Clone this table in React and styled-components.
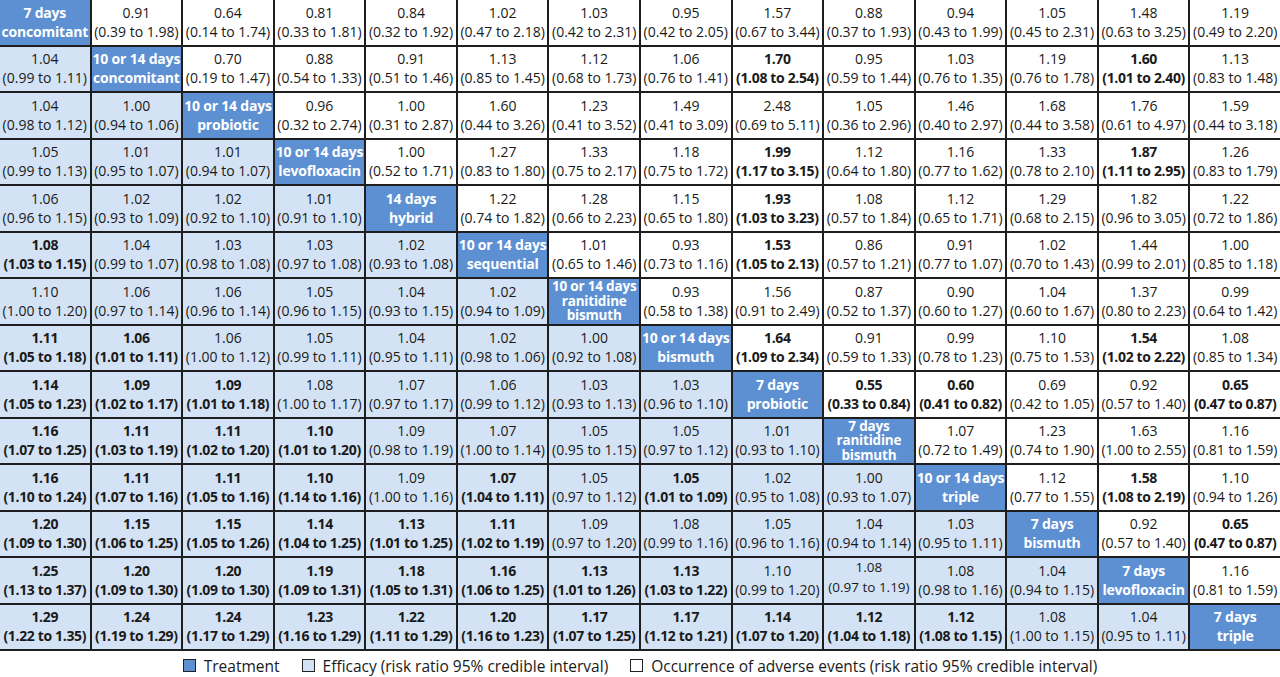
import React from "react";
import styled, { createGlobalStyle } from "styled-components";

const GlobalStyle = createGlobalStyle`
  html, body { margin: 0; padding: 0; background: #ffffff; }
  body { font-family: "Open Sans", "Noto Sans", sans-serif; color: #1a1a1a; }
`;

const TREATMENTS = [
  ["7 days", "concomitant"],
  ["10 or 14 days", "concomitant"],
  ["10 or 14 days", "probiotic"],
  ["10 or 14 days", "levofloxacin"],
  ["14 days", "hybrid"],
  ["10 or 14 days", "sequential"],
  ["10 or 14 days", "ranitidine", "bismuth"],
  ["10 or 14 days", "bismuth"],
  ["7 days", "probiotic"],
  ["7 days", "ranitidine", "bismuth"],
  ["10 or 14 days", "triple"],
  ["7 days", "bismuth"],
  ["7 days", "levofloxacin"],
  ["7 days", "triple"],
];

// "*" prefix marks bold (significant) values
const ROWS = [
  "T|0.91 0.39 1.98|0.64 0.14 1.74|0.81 0.33 1.81|0.84 0.32 1.92|1.02 0.47 2.18|1.03 0.42 2.31|0.95 0.42 2.05|1.57 0.67 3.44|0.88 0.37 1.93|0.94 0.43 1.99|1.05 0.45 2.31|1.48 0.63 3.25|1.19 0.49 2.20",
  "1.04 0.99 1.11|T|0.70 0.19 1.47|0.88 0.54 1.33|0.91 0.51 1.46|1.13 0.85 1.45|1.12 0.68 1.73|1.06 0.76 1.41|*1.70 1.08 2.54|0.95 0.59 1.44|1.03 0.76 1.35|1.19 0.76 1.78|*1.60 1.01 2.40|1.13 0.83 1.48",
  "1.04 0.98 1.12|1.00 0.94 1.06|T|0.96 0.32 2.74|1.00 0.31 2.87|1.60 0.44 3.26|1.23 0.41 3.52|1.49 0.41 3.09|2.48 0.69 5.11|1.05 0.36 2.96|1.46 0.40 2.97|1.68 0.44 3.58|1.76 0.61 4.97|1.59 0.44 3.18",
  "1.05 0.99 1.13|1.01 0.95 1.07|1.01 0.94 1.07|T|1.00 0.52 1.71|1.27 0.83 1.80|1.33 0.75 2.17|1.18 0.75 1.72|*1.99 1.17 3.15|1.12 0.64 1.80|1.16 0.77 1.62|1.33 0.78 2.10|*1.87 1.11 2.95|1.26 0.83 1.79",
  "1.06 0.96 1.15|1.02 0.93 1.09|1.02 0.92 1.10|1.01 0.91 1.10|T|1.22 0.74 1.82|1.28 0.66 2.23|1.15 0.65 1.80|*1.93 1.03 3.23|1.08 0.57 1.84|1.12 0.65 1.71|1.29 0.68 2.15|1.82 0.96 3.05|1.22 0.72 1.86",
  "*1.08 1.03 1.15|1.04 0.99 1.07|1.03 0.98 1.08|1.03 0.97 1.08|1.02 0.93 1.08|T|1.01 0.65 1.46|0.93 0.73 1.16|*1.53 1.05 2.13|0.86 0.57 1.21|0.91 0.77 1.07|1.02 0.70 1.43|1.44 0.99 2.01|1.00 0.85 1.18",
  "1.10 1.00 1.20|1.06 0.97 1.14|1.06 0.96 1.14|1.05 0.96 1.15|1.04 0.93 1.15|1.02 0.94 1.09|T|0.93 0.58 1.38|1.56 0.91 2.49|0.87 0.52 1.37|0.90 0.60 1.27|1.04 0.60 1.67|1.37 0.80 2.23|0.99 0.64 1.42",
  "*1.11 1.05 1.18|*1.06 1.01 1.11|1.06 1.00 1.12|1.05 0.99 1.11|1.04 0.95 1.11|1.02 0.98 1.06|1.00 0.92 1.08|T|*1.64 1.09 2.34|0.91 0.59 1.33|0.99 0.78 1.23|1.10 0.75 1.53|*1.54 1.02 2.22|1.08 0.85 1.34",
  "*1.14 1.05 1.23|*1.09 1.02 1.17|*1.09 1.01 1.18|1.08 1.00 1.17|1.07 0.97 1.17|1.06 0.99 1.12|1.03 0.93 1.13|1.03 0.96 1.10|T|*0.55 0.33 0.84|*0.60 0.41 0.82|0.69 0.42 1.05|0.92 0.57 1.40|*0.65 0.47 0.87",
  "*1.16 1.07 1.25|*1.11 1.03 1.19|*1.11 1.02 1.20|*1.10 1.01 1.20|1.09 0.98 1.19|1.07 1.00 1.14|1.05 0.95 1.15|1.05 0.97 1.12|1.01 0.93 1.10|T|1.07 0.72 1.49|1.23 0.74 1.90|1.63 1.00 2.55|1.16 0.81 1.59",
  "*1.16 1.10 1.24|*1.11 1.07 1.16|*1.11 1.05 1.16|*1.10 1.14 1.16|1.09 1.00 1.16|*1.07 1.04 1.11|1.05 0.97 1.12|*1.05 1.01 1.09|1.02 0.95 1.08|1.00 0.93 1.07|T|1.12 0.77 1.55|*1.58 1.08 2.19|1.10 0.94 1.26",
  "*1.20 1.09 1.30|*1.15 1.06 1.25|*1.15 1.05 1.26|*1.14 1.04 1.25|*1.13 1.01 1.25|*1.11 1.02 1.19|1.09 0.97 1.20|1.08 0.99 1.16|1.05 0.96 1.16|1.04 0.94 1.14|1.03 0.95 1.11|T|0.92 0.57 1.40|*0.65 0.47 0.87",
  "*1.25 1.13 1.37|*1.20 1.09 1.30|*1.20 1.09 1.30|*1.19 1.09 1.31|*1.18 1.05 1.31|*1.16 1.06 1.25|*1.13 1.01 1.26|*1.13 1.03 1.22|1.10 0.99 1.20|~1.08 0.97 1.19|1.08 0.98 1.16|1.04 0.94 1.15|T|1.16 0.81 1.59",
  "*1.29 1.22 1.35|*1.24 1.19 1.29|*1.24 1.17 1.29|*1.23 1.16 1.29|*1.22 1.11 1.29|*1.20 1.16 1.23|*1.17 1.07 1.25|*1.17 1.12 1.21|*1.14 1.07 1.20|*1.12 1.04 1.18|*1.12 1.08 1.15|1.08 1.00 1.15|1.04 0.95 1.11|T",
].map((r) => r.split("|"));

const COLORS = {
  treatment: "#5d90d2",
  efficacy: "#d3e3f5",
  adverse: "#ffffff",
  line: "#1e1e1e",
};

const Page = styled.div`
  width: 1280px;
  height: 677px;
  display: flex;
  flex-direction: column;
  overflow: hidden;
`;

const Grid = styled.div`
  display: grid;
  grid-template-columns: repeat(14, 1fr);
  grid-template-rows: repeat(14, 44.5px);
  gap: 2px;
  padding-bottom: 2px;
  background: ${COLORS.line};
`;

const Cell = styled.div`
  background: ${(p) => COLORS[p.$kind]};
  display: flex;
  flex-direction: column;
  align-items: center;
  justify-content: center;
  text-align: center;
  white-space: nowrap;
  font-size: ${(p) => (p.$odd ? "13.5px" : "14px")};
  line-height: 19px;
  font-weight: ${(p) => (p.$bold ? 700 : 400)};
  letter-spacing: ${(p) => (p.$bold ? "-0.35px" : "0")};
  color: #1a1a1a;
  padding-bottom: ${(p) => (p.$odd ? "6px" : "1px")};
`;

const Line = styled.div`
  height: ${(p) => p.$h || 19}px;
  line-height: ${(p) => p.$h || 19}px;
  overflow: visible;
  margin-bottom: ${(p) => (p.$gap ? p.$gap : 0)}px;
`;

const TreatCell = styled.div`
  background: ${COLORS.treatment};
  display: flex;
  flex-direction: column;
  align-items: center;
  justify-content: center;
  text-align: center;
  white-space: nowrap;
  color: #ffffff;
  font-weight: 700;
  font-size: ${(p) => (p.$lines > 2 ? "13.5px" : "14px")};
  letter-spacing: -0.2px;
  padding-bottom: 1px;
`;

const Legend = styled.div`
  flex: 1;
  display: flex;
  align-items: center;
  justify-content: center;
  gap: 22px;
  padding-top: 3px;
  font-size: 15.5px;
  color: #1a1a1a;
`;

const LegendItem = styled.div`
  display: flex;
  align-items: center;
  gap: 8px;
`;

const Swatch = styled.span`
  width: 11px;
  height: 11px;
  border: 1.5px solid #222;
  background: ${(p) => COLORS[p.$kind]};
  display: inline-block;
`;

function DataCell({ raw, kind }) {
  const bold = raw.startsWith("*");
  const odd = raw.startsWith("~");
  const [est, lo, hi] = raw.replace(/^[*~]/, "").split(" ");
  return (
    <Cell $kind={kind} $bold={bold} $odd={odd}>
      <Line $gap={odd ? 1 : 0}>{est}</Line>
      <Line>{`(${lo} to ${hi})`}</Line>
    </Cell>
  );
}

export default function App() {
  return (
    <>
      <GlobalStyle />
      <Page>
        <Grid>
          {ROWS.map((row, i) =>
            row.map((raw, j) => {
              if (i === j) {
                const lines = TREATMENTS[i];
                const h = lines.length > 2 ? 14.5 : 19;
                return (
                  <TreatCell key={`${i}-${j}`} $lines={lines.length}>
                    {lines.map((l) => (
                      <Line key={l} $h={h}>
                        {l}
                      </Line>
                    ))}
                  </TreatCell>
                );
              }
              return (
                <DataCell
                  key={`${i}-${j}`}
                  raw={raw}
                  kind={j < i ? "efficacy" : "adverse"}
                />
              );
            })
          )}
        </Grid>
        <Legend>
          <LegendItem>
            <Swatch $kind="treatment" />
            Treatment
          </LegendItem>
          <LegendItem>
            <Swatch $kind="efficacy" />
            Efficacy (risk ratio 95% credible interval)
          </LegendItem>
          <LegendItem>
            <Swatch $kind="adverse" />
            Occurrence of adverse events (risk ratio 95% credible interval)
          </LegendItem>
        </Legend>
      </Page>
    </>
  );
}
